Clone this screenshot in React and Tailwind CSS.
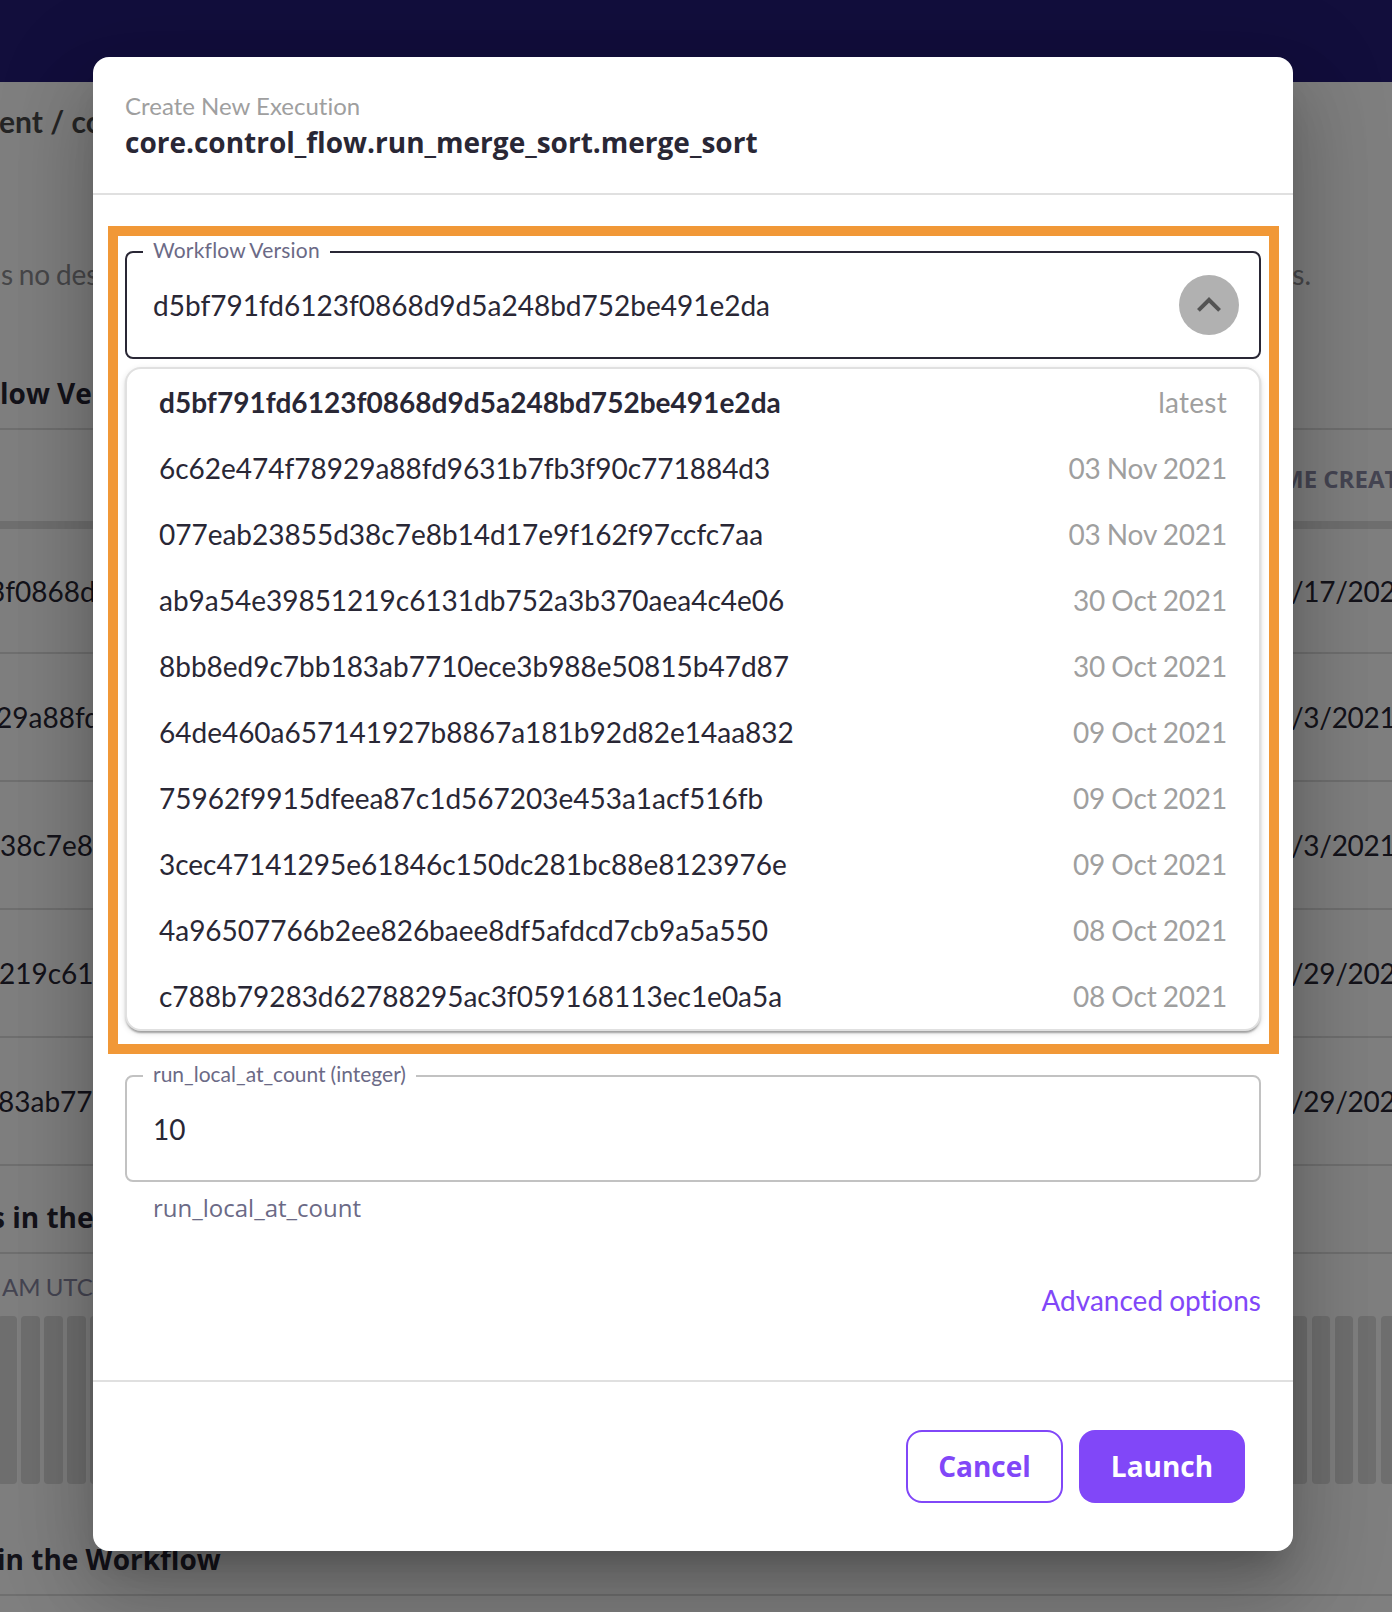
const LATO = "font-['Lato','Noto_Sans',sans-serif]";
const OPEN = "font-['Open_Sans','Noto_Sans',sans-serif]";

const versions = [
  ['d5bf791fd6123f0868d9d5a248bd752be491e2da', 'latest'],
  ['6c62e474f78929a88fd9631b7fb3f90c771884d3', '03 Nov 2021'],
  ['077eab23855d38c7e8b14d17e9f162f97ccfc7aa', '03 Nov 2021'],
  ['ab9a54e39851219c6131db752a3b370aea4c4e06', '30 Oct 2021'],
  ['8bb8ed9c7bb183ab7710ece3b988e50815b47d87', '30 Oct 2021'],
  ['64de460a657141927b8867a181b92d82e14aa832', '09 Oct 2021'],
  ['75962f9915dfeea87c1d567203e453a1acf516fb', '09 Oct 2021'],
  ['3cec47141295e61846c150dc281bc88e8123976e', '09 Oct 2021'],
  ['4a96507766b2ee826baee8df5afdcd7cb9a5a550', '08 Oct 2021'],
  ['c788b79283d62788295ac3f059168113ec1e0a5a', '08 Oct 2021'],
];

const rows = [
  ['3f0868d9', '/17/2021', 'h-[125px]', '-ml-[11px]'],
  ['29a88fd9', '/3/2021', 'h-[128px]', '-ml-[4px]'],
  ['38c7e8b', '/3/2021', 'h-[128px]', 'ml-0'],
  ['219c61', '/29/2021', 'h-[128px]', '-ml-px'],
  ['83ab77', '/29/2021', 'h-[128px]', '-ml-[2px]'],
];

/* Workflow page that sits behind the dialog */
function WorkflowPage() {
  return (
    <div className="h-full w-full overflow-hidden whitespace-nowrap bg-white text-[28px] leading-[40px] text-[#292735]">
      <div className="h-[82px] bg-[#241d78]" />
      <div className="flex h-[113px] items-start pt-[19px]">
        <span className="-ml-px text-[30px] font-bold text-[#4b4b4b]">ent / co</span>
      </div>
      <div className="flex h-[178px] justify-between pt-[59px] text-[#8e8e93]">
        <span className="-ml-[13px] [word-spacing:-1.5px]">as no des</span>
        <span className="mr-[81px]">s.</span>
      </div>
      <div className={`${OPEN} h-[57px] border-b-2 border-[#dedede] font-bold`}>low Ve</div>
      <div className={`${OPEN} flex h-[99px] justify-end overflow-hidden border-b-8 border-[#dedede] pt-[29px] text-[24px] font-bold text-[#8b8aa5]`}>
        <span className="w-[111px] shrink-0">ME CREATED</span>
      </div>
      {rows.map(([id, date, height, shift], i) => (
        <div key={i} className={`${height} flex items-center justify-between overflow-hidden border-b-2 border-[#dedede]`}>
          <span className={shift}>{id}</span>
          <span className="w-[101px] shrink-0 tracking-[-0.3px]">{date}</span>
        </div>
      ))}
      <div className={`${OPEN} h-[88px] border-b-2 border-[#dedede] pt-[31px] font-bold`}>
        <span className="-ml-[9px]">s in the</span>
      </div>
      <div className="h-[62px] pt-[13px] text-[24px] text-[#8b8aa5]">
        <span className="ml-[2px] [word-spacing:-1px]">AM UTC</span>
      </div>
      <div className="-ml-[2px] flex h-[168px] gap-[4.56px]">
        {Array.from({ length: 62 }, (_, i) => (
          <span key={i} className="w-[18.5px] shrink-0 rounded-[4px] bg-[#dedede]" />
        ))}
      </div>
      <div className={`${OPEN} mt-[55px] h-[57px] border-b-2 border-[#dedede] font-bold`}>
        <span className="-ml-[3px]">in the Workflow</span>
      </div>
    </div>
  );
}

function FieldLabel({ children, className }) {
  return (
    <label className={`${className} absolute -top-[15px] left-[16px] bg-white px-[10px] text-[21px] leading-[24px] text-[#6b6a86]`}>
      {children}
    </label>
  );
}

export default function App() {
  return (
    <div className={`${LATO} relative h-[1612px] w-[1392px] overflow-hidden`}>
      <WorkflowPage />
      <div className="absolute inset-0 bg-black/50 pl-[93px] pt-[57px]">
        <div className="relative flex h-[1494px] w-[1200px] flex-col rounded-[16px] bg-white text-[28px] text-[#292735] shadow-[0_22px_30px_-14px_rgba(0,0,0,0.2),0_48px_76px_6px_rgba(0,0,0,0.14),0_18px_92px_16px_rgba(0,0,0,0.12)]">
          <header className="h-[138px] border-b-2 border-[#e0e0e0] px-8 pt-[34px]">
            <p className="text-[24px] leading-[30px] text-[#9f9f9f] [font-variant-ligatures:none]">Create New Execution</p>
            <h1 className={`${OPEN} mt-px font-bold leading-[40px]`}>core.control_flow.run_merge_sort.merge_sort</h1>
          </header>

          <main className="flex h-[1185px] flex-col px-8 pt-[56px]">
            <div className="relative flex h-[108px] shrink-0 items-center justify-between rounded-[8px] border-2 border-[#292735] pl-[26px] pr-[20px]">
              <FieldLabel className="tracking-[0.2px] [font-variant-ligatures:common-ligatures] [word-spacing:-1px]">Workflow Version</FieldLabel>
              <span>d5bf791fd6123f0868d9d5a248bd752be491e2da</span>
              <button className="flex size-[60px] items-center justify-center rounded-full bg-[#b1b1b1]">
                <svg viewBox="0 0 24 24" className="size-12 fill-[#545454]">
                  <path d="M12 8l-6 6 1.41 1.41L12 10.83l4.59 4.58L18 14z" />
                </svg>
              </button>
            </div>

            <ul className="mt-2 shrink-0 rounded-[16px] border-2 border-[#e0e0e0] bg-white shadow-[0_4px_2px_-2px_rgba(0,0,0,0.2),0_2px_2px_0_rgba(0,0,0,0.14),0_2px_6px_0_rgba(0,0,0,0.12)]">
              {versions.map(([id, date], i) => (
                <li key={id} className="flex h-[66px] items-center justify-between px-8">
                  <span className={i === 0 ? 'font-bold tracking-[0.03px]' : 'tracking-[-0.01px]'}>{id}</span>
                  <span className={`text-[#9f9f9f] ${i === 0 ? 'tracking-[0.25px]' : 'tracking-[-0.15px] [word-spacing:-0.9px]'}`}>{date}</span>
                </li>
              ))}
            </ul>

            <div className="relative mt-[44px] flex h-[107px] shrink-0 items-center rounded-[8px] border-2 border-[#c2c2c2] pl-[26px] pt-px">
              <FieldLabel className="[word-spacing:-0.5px]">run_local_at_count (integer)</FieldLabel>
              <span>10</span>
            </div>
            <p className={`${OPEN} mt-[11px] pl-[28px] text-[24px] leading-[30px] text-[#6b6a86]`}>run_local_at_count</p>
            <button className="mt-[57px] self-end leading-[40px] text-[#8147f8] [font-variant-ligatures:none] [word-spacing:-1px]">Advanced options</button>
          </main>

          <footer className={`${OPEN} flex flex-1 items-start justify-end gap-4 border-t-2 border-[#e0e0e0] pr-12 pt-12 font-bold`}>
            <button className="h-[73px] w-[157px] rounded-[16px] border-2 border-[#8147f8] pb-px text-[#8147f8]">Cancel</button>
            <button className="h-[73px] w-[166px] rounded-[16px] bg-[#8147f8] pb-px text-white">Launch</button>
          </footer>

          <div className="pointer-events-none absolute left-[15px] top-[169px] h-[828px] w-[1171px] border-10 border-[#f19837]" />
        </div>
      </div>
    </div>
  );
}
